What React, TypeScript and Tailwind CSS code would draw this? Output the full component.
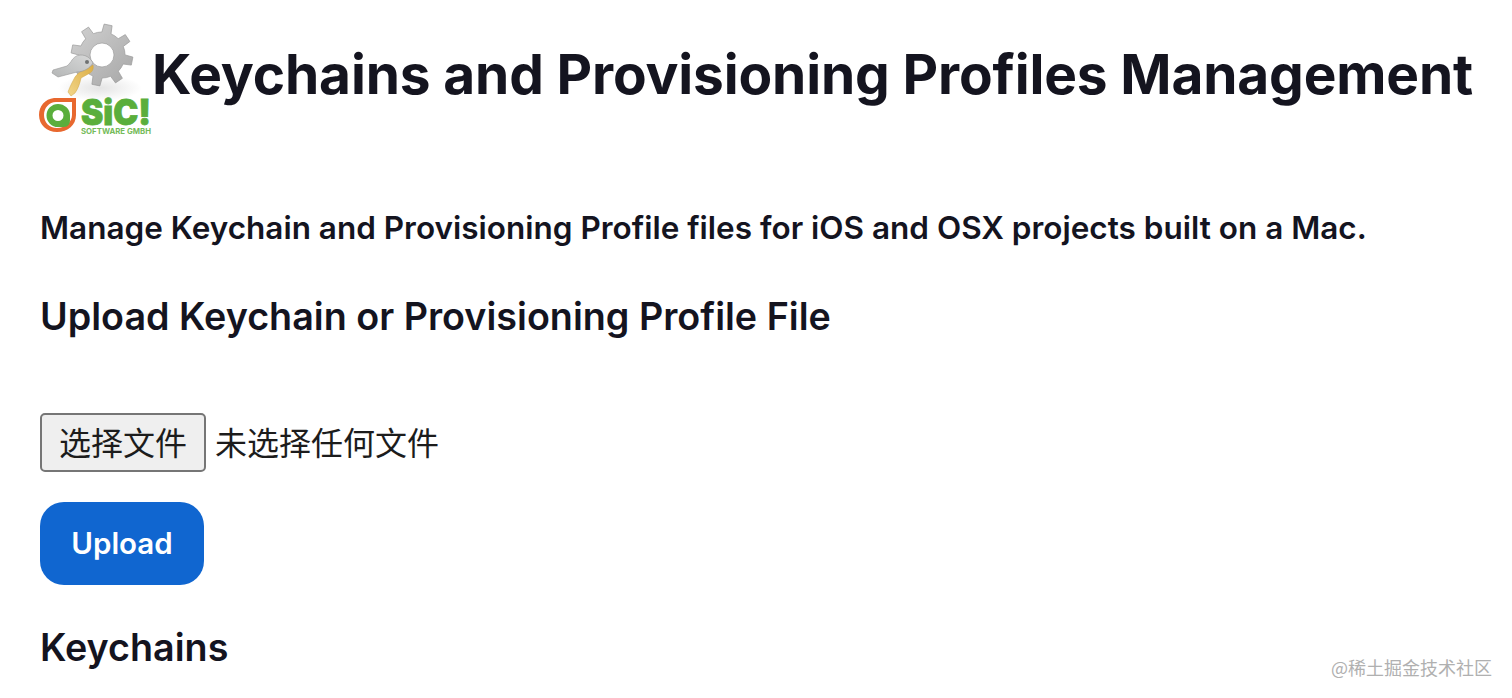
import React from "react";

const sans = "font-['Inter','Liberation_Sans',sans-serif]";

// 8-tooth gear outline around (cx, cy)
const gearPath = (cx: number, cy: number, outer: number, root: number, hole: number) => {
  const teeth = 8;
  const pts: string[] = [];
  for (let i = 0; i < teeth; i++) {
    const a = (i / teeth) * Math.PI * 2 + 0.2;
    const step = (Math.PI * 2) / teeth;
    const offsets: [number, number][] = [
      [-0.5 * step, root],
      [-0.26 * step, root],
      [-0.17 * step, outer],
      [0.17 * step, outer],
      [0.26 * step, root],
    ];
    offsets.forEach(([d, r]) => {
      pts.push(`${(cx + Math.cos(a + d) * r).toFixed(1)} ${(cy + Math.sin(a + d) * r).toFixed(1)}`);
    });
  }
  return `M${pts.join(" L")} Z M${cx} ${cy - hole} A${hole} ${hole} 0 1 0 ${cx} ${cy + hole} A${hole} ${hole} 0 1 0 ${cx} ${cy - hole} Z`;
};

const Logo = () => (
  <svg viewBox="0 0 112 116" className="w-[112px] h-[116px] shrink-0 overflow-visible">
    <defs>
      <linearGradient id="gear" x1="0" y1="0" x2="1" y2="1">
        <stop offset="0" stopColor="#d2d2d2" />
        <stop offset="1" stopColor="#a6a6a6" />
      </linearGradient>
      <linearGradient id="keyGold" x1="0" y1="1" x2="1" y2="0">
        <stop offset="0" stopColor="#f2d68a" />
        <stop offset="1" stopColor="#dcae45" />
      </linearGradient>
      <linearGradient id="keyGrey" x1="0" y1="1" x2="1" y2="0">
        <stop offset="0" stopColor="#b4b6b6" />
        <stop offset="1" stopColor="#d8d9d9" />
      </linearGradient>
      <radialGradient id="shade">
        <stop offset="0" stopColor="#e4e4e4" />
        <stop offset="1" stopColor="#ffffff" />
      </radialGradient>
    </defs>
    <ellipse cx="60" cy="68" rx="42" ry="13" fill="url(#shade)" />
    <path fillRule="evenodd" fill="url(#gear)" stroke="#9a9a9a" strokeWidth="0.7" d={gearPath(62, 35, 31, 23, 12)} />
    {/* gold key */}
    <path
      fill="url(#keyGold)"
      stroke="#cfa445"
      strokeWidth="0.5"
      d="M53 45 C54 49 52 52 50 53 L41 58 C40 63 38 69 35 73 L31 76 L28 72 C30 66 33 61 35 57 C38 53 41 51 43 50 Z"
    />
    {/* grey key */}
    <path
      fill="url(#keyGrey)"
      stroke="#979797"
      strokeWidth="0.6"
      d="M32 40 C35 36 38 35 41 35 C45 35 50 37 53 43 C51 46 49 48 47 49 C44 51 40 52 37 52 L18 57 L12 53 L13 50 L27 46 C29 44 31 42 32 40 Z"
    />
    <circle cx="47" cy="42" r="2" fill="#6f7272" />
    {/* SiC! mark */}
    <path
      fill="#e8682f"
      fillRule="evenodd"
      d="M14 78 C5 79 -1 86 -1 95 C-1 105 7 112 17 112 C28 112 36 105 36 95 L36 78 Z M16 82 L32 82 L32 95 C32 102 25 108 17 108 C9 108 4 102 4 95 C4 88 9 82 16 82 Z"
    />
    <path
      fill="#5aae3c"
      fillRule="evenodd"
      d="M18 84 A11.5 11.5 0 1 0 18 107 L24 107 C28 107 30 104 30 100 L30 95.5 A12 11.5 0 0 0 18 84 Z M18 90 A5.5 5.5 0 1 1 18 101 A5.5 5.5 0 1 1 18 90 Z"
    />
    <text
      x="41"
      y="105"
      fontFamily="Inter, 'Liberation Sans', sans-serif"
      fontWeight="900"
      fontSize="35"
      fill="#5aae3c"
      stroke="#5aae3c"
      strokeWidth="0.8"
      textLength="70"
      lengthAdjust="spacingAndGlyphs"
    >
      SiC!
    </text>
    <text
      x="41"
      y="113.5"
      fontFamily="Inter, 'Liberation Sans', sans-serif"
      fontWeight="700"
      fontSize="7.5"
      fill="#74bb5a"
      textLength="70"
      lengthAdjust="spacingAndGlyphs"
    >
      SOFTWARE GMBH
    </text>
  </svg>
);

const App = () => {
  return (
    <div className={`relative h-[698px] overflow-hidden bg-white pl-10 text-[#14141f] ${sans}`}>
      <div className="flex items-start pt-5">
        <Logo />
        <h1 className="mt-[20px] whitespace-nowrap text-[55px] leading-[68px] font-bold tracking-[-0.15px]">
          Keychains and Provisioning Profiles Management
        </h1>
      </div>
      <p className="mt-[74px] text-[31.5px] leading-[36px] font-semibold">
        Manage Keychain and Provisioning Profile files for iOS and OSX projects built on a Mac.
      </p>
      <h2 className="mt-[47px] text-[37.7px] leading-[46px] font-[560]">
        Upload Keychain or Provisioning Profile File
      </h2>
      <div className="mt-[74px] flex items-center font-['Noto_Sans_CJK_SC',sans-serif] text-[32px] leading-[44px] text-[#1c1c1c]">
        <button className="h-[59px] w-[166px] rounded-[5px] border-2 border-[#767676] bg-[#efefef] pb-1">
          选择文件
        </button>
        <span className="ml-[9px] pb-1">未选择任何文件</span>
      </div>
      <button className="mt-[30px] block h-[83px] w-[164px] rounded-[24px] bg-[#1066d0] text-[29.5px] font-[560] text-white">
        Upload
      </button>
      <h2 className="mt-[39px] text-[37.7px] leading-[46px] font-[560]">Keychains</h2>
      <span className="absolute right-[20px] top-[655px] font-['Noto_Sans_CJK_SC',sans-serif] text-[18px] leading-[24px] text-[#b0b0b0]">
        @稀土掘金技术社区
      </span>
    </div>
  );
};

export default App;
